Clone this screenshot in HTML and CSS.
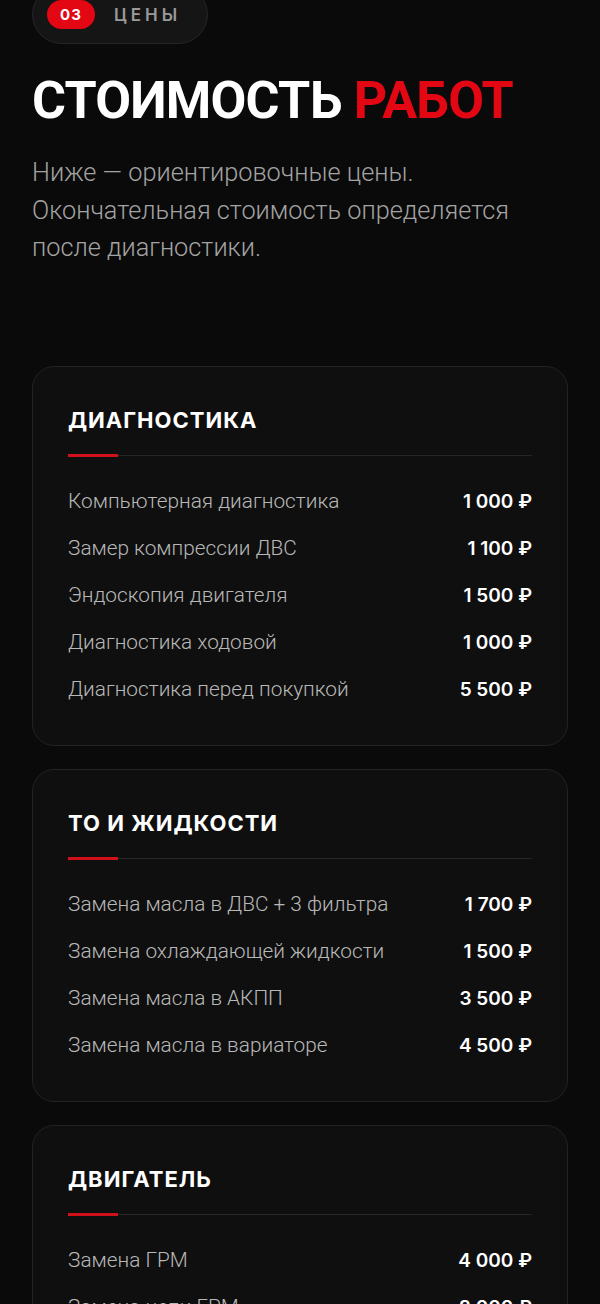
FILE: index.html
```html
<!doctype html>
<html lang="ru">
<head>
    <meta charset="UTF-8">
    <meta name="viewport" content="width=device-width, initial-scale=1.0">
    <title>Цены</title>
    <link rel="stylesheet" href="styles.css">
</head>
<body>
    <section class="prices">
        <div class="tag">
            <span class="tag-num">03</span>
            <span class="tag-text">Цены</span>
        </div>
        <h2 class="title">Стоимость <span class="accent">работ</span></h2>
        <p class="lead">Ниже — ориентировочные цены. Окончательная стоимость определяется после диагностики.</p>

        <div class="cards">
            <div class="card">
                <h3 class="card-title">Диагностика</h3>
                <div class="card-line"></div>
                <ul class="price-list">
                    <li><span class="name">Компьютерная диагностика</span><span class="cost">1 000 ₽</span></li>
                    <li><span class="name">Замер компрессии ДВС</span><span class="cost">1 100 ₽</span></li>
                    <li><span class="name">Эндоскопия двигателя</span><span class="cost">1 500 ₽</span></li>
                    <li><span class="name">Диагностика ходовой</span><span class="cost">1 000 ₽</span></li>
                    <li><span class="name">Диагностика перед покупкой</span><span class="cost">5 500 ₽</span></li>
                </ul>
            </div>

            <div class="card">
                <h3 class="card-title">ТО и жидкости</h3>
                <div class="card-line"></div>
                <ul class="price-list">
                    <li><span class="name">Замена масла в ДВС + 3 фильтра</span><span class="cost">1 700 ₽</span></li>
                    <li><span class="name">Замена охлаждающей жидкости</span><span class="cost">1 500 ₽</span></li>
                    <li><span class="name">Замена масла в АКПП</span><span class="cost">3 500 ₽</span></li>
                    <li><span class="name">Замена масла в вариаторе</span><span class="cost">4 500 ₽</span></li>
                </ul>
            </div>

            <div class="card">
                <h3 class="card-title">Двигатель</h3>
                <div class="card-line"></div>
                <ul class="price-list">
                    <li><span class="name">Замена ГРМ</span><span class="cost">4 000 ₽</span></li>
                    <li><span class="name">Замена цепи ГРМ</span><span class="cost">8 000 ₽</span></li>
                    <li><span class="name">Ремонт ГБЦ</span><span class="cost">12 000 ₽</span></li>
                </ul>
            </div>
        </div>
    </section>
</body>
</html>
```

FILE: styles.css
```css
body {
    margin: 0;
    background: #0a0a0a;
    color: #fff;
    font-family: Roboto, "Liberation Sans", sans-serif;
}
.prices {
    padding: 0 32px 40px;
}
.tag {
    display: inline-flex;
    align-items: center;
    gap: 19px;
    margin-top: -15px;
    padding: 14px 26px 14px 14px;
    border: 1px solid #262626;
    border-radius: 40px;
    background: #151515;
}
.tag-num {
    display: inline-flex;
    align-items: center;
    justify-content: center;
    width: 48px;
    height: 29px;
    border-radius: 20px;
    background: #e30613;
    font-family: Inter, sans-serif;
    font-weight: 700;
    font-size: 15px;
    letter-spacing: 1px;
}
.tag-text {
    font-family: Inter, sans-serif;
    font-weight: 600;
    font-size: 17px;
    letter-spacing: 4px;
    text-transform: uppercase;
    color: #9a9a9a;
}
.title {
    margin: 28px 0 0;
    font-size: 52px;
    font-weight: 700;
    line-height: 1.1;
    letter-spacing: -0.8px;
    text-transform: uppercase;
}
.accent {
    color: #e30613;
}
.lead {
    margin: 25px 0 0;
    font-size: 25.3px;
    font-weight: 300;
    line-height: 37.5px;
    color: #a3a3a3;
}
.cards {
    display: flex;
    flex-direction: column;
    gap: 23px;
    margin-top: 99px;
}
.card {
    padding: 36px 35px 32px;
    border: 1px solid #232323;
    border-radius: 22px;
    background: #0f0f0f;
}
.card-title {
    margin: 0;
    font-family: Inter, sans-serif;
    font-size: 22px;
    font-weight: 700;
    line-height: 34px;
    letter-spacing: 1px;
    text-transform: uppercase;
}
.card-line {
    position: relative;
    height: 1px;
    margin: 18px 0 22px;
    background: #262626;
}
.card-line::before {
    content: "";
    position: absolute;
    left: 0;
    top: -1px;
    width: 50px;
    height: 3px;
    background: #d0101b;
}
.price-list {
    margin: 0;
    padding: 0;
    list-style: none;
}
.price-list li {
    display: flex;
    justify-content: space-between;
    align-items: center;
    height: 47px;
}
.name {
    font-size: 20.8px;
    font-weight: 300;
    color: #b8b8b8;
}
.cost {
    font-family: Inter, sans-serif;
    font-size: 19px;
    font-weight: 600;
}
```
